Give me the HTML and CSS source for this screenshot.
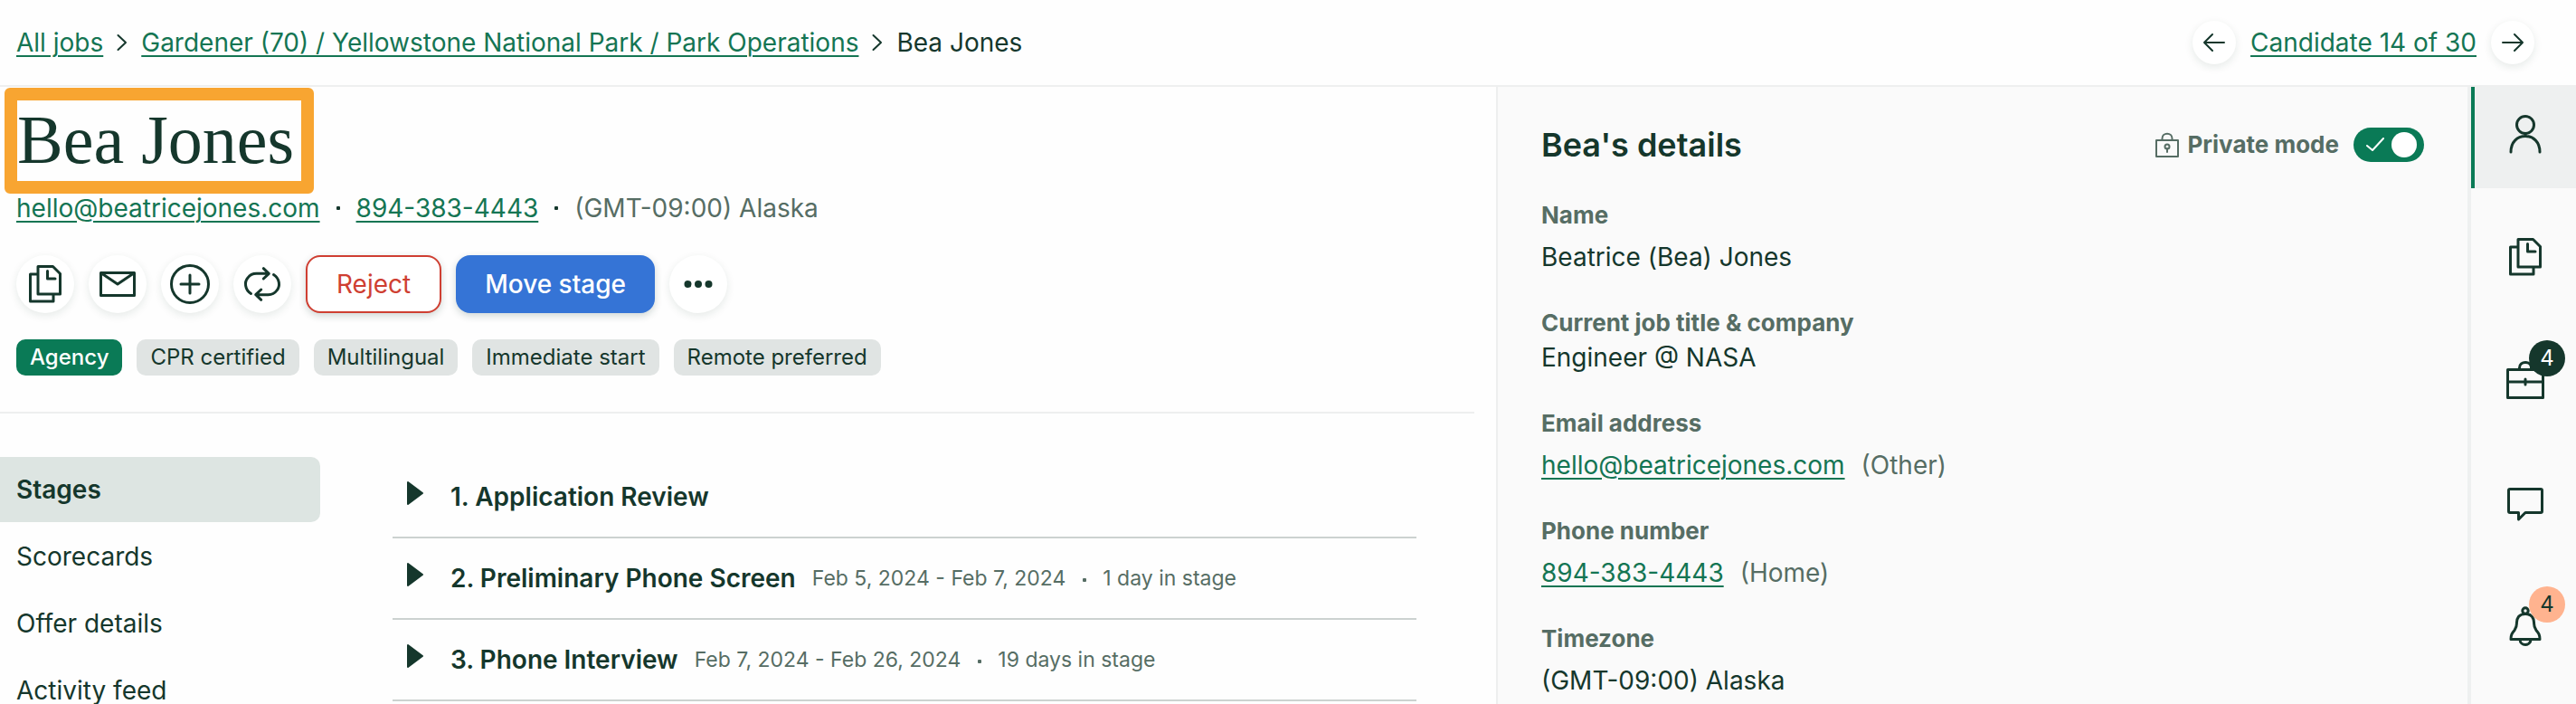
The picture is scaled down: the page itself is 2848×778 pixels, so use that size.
FILE: index.html
```html
<!DOCTYPE html>
<html lang="en">

<head>
    <meta charset="UTF-8">
    <title>Bea Jones</title>
    <link rel="stylesheet" href="styles.css">
</head>

<body>
    <svg width="0" height="0" class="defs" aria-hidden="true">
        <symbol id="docs" viewBox="0 0 48 48">
            <path d="M16 4.5H32.5L40.5 12.5V35H16ZM16 13H7.5V43H33V35M26.5 9.500V18H35"/>
        </symbol>
        <symbol id="chevron" viewBox="0 0 12 20">
            <path d="M1.500 2L10 10L1.500 18"/>
        </symbol>
    </svg>
    <header class="topbar">
        <nav class="crumbs" aria-label="Breadcrumb">
            <a href="#">All jobs</a>
            <svg class="chevron"><use href="#chevron"/></svg>
            <a href="#">Gardener (70) / Yellowstone National Park / Park Operations</a>
            <svg class="chevron"><use href="#chevron"/></svg>
            <span>Bea Jones</span>
        </nav>
        <div class="pager">
            <button class="round round--small" aria-label="Previous candidate">
                <svg class="arrow" viewBox="0 0 24 24"><path d="M23 12H1M10 3L1 12L10 21"/></svg>
            </button>
            <a href="#">Candidate 14 of 30</a>
            <button class="round round--small" aria-label="Next candidate">
                <svg class="arrow" viewBox="0 0 24 24"><path d="M1 12H23M14 3L23 12L14 21"/></svg>
            </button>
        </div>
    </header>

    <div class="layout">
        <main class="profile">
            <section class="summary">
                <h1>Bea Jones</h1>
                <div class="contact">
                    <a href="#">hello@beatricejones.com</a>
                    <span class="dot"></span>
                    <a href="#">894-383-4443</a>
                    <span class="dot"></span>
                    <span class="muted">(GMT-09:00) Alaska</span>
                </div>
                <div class="actions">
                    <button class="round" aria-label="Copy"><svg class="icon"><use href="#docs"/></svg></button>
                    <button class="round" aria-label="Email">
                        <svg class="icon" viewBox="0 0 48 48"><path d="M5.500 11.500H42.500V36.500H5.500ZM5.500 11.500L24 24L42.500 11.500"/></svg>
                    </button>
                    <button class="round" aria-label="Add">
                        <svg class="icon" viewBox="0 0 48 48"><circle cx="24" cy="24" r="20.500"/><path d="M24 14V34M14 24H34"/></svg>
                    </button>
                    <button class="round" aria-label="Transfer">
                        <svg class="icon" viewBox="0 0 48 48"><path d="M11.500 34.500C4.500 30 4 21.500 8 17C10.500 13.500 13.500 12.300 17.500 12.300H31M25.300 6.700L31.300 12.300L25.300 18M36.500 13.500C43.500 18 44 26.500 40 31C37.500 34.500 34.500 35.700 30.500 35.700H17M22.700 41.300L16.700 35.700L22.700 30"/></svg>
                    </button>
                    <button class="btn btn--reject">Reject</button>
                    <button class="btn btn--move">Move stage</button>
                    <button class="round" aria-label="More">
                        <svg class="icon icon--solid" viewBox="0 0 48 48"><circle cx="12.500" cy="24" r="4"/><circle cx="24" cy="24" r="4"/><circle cx="35.500" cy="24" r="4"/></svg>
                    </button>
                </div>
                <ul class="tags">
                    <li class="tag tag--agency">Agency</li>
                    <li class="tag">CPR certified</li>
                    <li class="tag">Multilingual</li>
                    <li class="tag">Immediate start</li>
                    <li class="tag">Remote preferred</li>
                </ul>
            </section>

            <div class="content">
                <nav class="sections" aria-label="Sections">
                    <a href="#" class="active">Stages</a>
                    <a href="#">Scorecards</a>
                    <a href="#">Offer details</a>
                    <a href="#">Activity feed</a>
                </nav>
                <div class="stages">
                    <button class="stage" aria-expanded="false">
                        <svg class="caret" viewBox="0 0 18 26"><path d="M1 1L17 13L1 25Z"/></svg>
                        <span class="stage__name">1. Application Review</span>
                    </button>
                    <button class="stage" aria-expanded="false">
                        <svg class="caret" viewBox="0 0 18 26"><path d="M1 1L17 13L1 25Z"/></svg>
                        <span class="stage__name">2. Preliminary Phone Screen</span>
                        <span class="stage__meta">Feb 5, 2024 - Feb 7, 2024 <span class="dot"></span> 1 day in stage</span>
                    </button>
                    <button class="stage" aria-expanded="false">
                        <svg class="caret" viewBox="0 0 18 26"><path d="M1 1L17 13L1 25Z"/></svg>
                        <span class="stage__name">3. Phone Interview</span>
                        <span class="stage__meta">Feb 7, 2024 - Feb 26, 2024 <span class="dot"></span> 19 days in stage</span>
                    </button>
                </div>
            </div>
        </main>

        <aside class="details">
            <div class="details__head">
                <h2>Bea's details</h2>
                <label class="private">
                    <svg class="lock" viewBox="0 0 28 28"><path d="M2 9H26V27H2ZM8.500 9V7C8.500 0 19.500 0 19.500 7V9M14 18V22"/><circle cx="14" cy="16" r="2.500"/></svg>
                    <span>Private mode</span>
                    <span class="toggle">
                        <input type="checkbox" role="switch" checked>
                        <svg class="toggle__check" viewBox="0 0 20 16"><path d="M1 9L7 14L19 1"/></svg>
                        <span class="toggle__knob"></span>
                    </span>
                </label>
            </div>
            <dl>
                <div class="field">
                    <dt>Name</dt>
                    <dd>Beatrice (Bea) Jones</dd>
                </div>
                <div class="field field--compact">
                    <dt>Current job title &amp; company</dt>
                    <dd>Engineer @ NASA</dd>
                </div>
                <div class="field">
                    <dt>Email address</dt>
                    <dd><a href="#">hello@beatricejones.com</a><span class="muted">(Other)</span></dd>
                </div>
                <div class="field">
                    <dt>Phone number</dt>
                    <dd><a href="#">894-383-4443</a><span class="muted">(Home)</span></dd>
                </div>
                <div class="field">
                    <dt>Timezone</dt>
                    <dd>(GMT-09:00) Alaska</dd>
                </div>
            </dl>
        </aside>

        <nav class="rail" aria-label="Panels">
            <button class="rail__item rail__item--active" aria-label="Details">
                <svg class="icon" viewBox="0 0 48 48"><circle cx="24" cy="14" r="9.500"/><path d="M8 44C8 33 15 26.500 24 26.500S40 33 40 44M24 24V26"/></svg>
            </button>
            <button class="rail__item" aria-label="Documents">
                <svg class="icon"><use href="#docs"/></svg>
            </button>
            <button class="rail__item" aria-label="Jobs">
                <span class="rail__icon">
                    <svg class="icon" viewBox="0 0 48 48"><path d="M4.500 12.500H43.500V43.500H4.500ZM4.500 26H43.500M24 23V29M17.500 12V10.500C17.500 2.500 30.500 2.500 30.500 10.500V12"/></svg>
                    <span class="badge">4</span>
                </span>
            </button>
            <button class="rail__item" aria-label="Comments">
                <svg class="icon" viewBox="0 0 48 48"><path d="M7 8.500H41Q42.500 8.500 42.500 10V33Q42.500 34.500 41 34.500H24L16.500 42V34.500H7Q5.500 34.500 5.500 33V10Q5.500 8.500 7 8.500Z"/></svg>
            </button>
            <button class="rail__item" aria-label="Notifications">
                <span class="rail__icon">
                    <svg class="icon" viewBox="0 0 48 48"><circle cx="24" cy="7" r="3.200"/><path d="M8 38.500C8 33 9.500 31.500 12 28.500C17 22 12 19.500 16.500 13.500C20 9.500 28 9.500 31.500 13.500C36 19.500 31 22 36 28.500C38.500 31.500 40 33 40 38.500ZM18 38.500C18 46.500 30 46.500 30 38.500"/></svg>
                    <span class="badge badge--alert">4</span>
                </span>
            </button>
        </nav>
    </div>
</body>

</html>
```

FILE: styles.css
```css
* {
    box-sizing: border-box;
}
body {
    margin: 0;
    height: 100vh;
    display: flex;
    flex-direction: column;
    overflow: hidden;
    background: #fefefe;
    color: #15372c;
    font-family: Inter, "Liberation Sans", sans-serif;
    font-size: 28px;
    line-height: 36px;
}
h1, h2, ul, dl, dd {
    margin: 0;
    padding: 0;
}
a {
    color: #147553;
    text-decoration-thickness: 2px;
    text-underline-offset: 4px;
}
button {
    padding: 0;
    border: none;
    background: none;
    color: inherit;
    font: inherit;
    cursor: pointer;
}
svg {
    display: block;
    flex: none;
    fill: none;
    stroke: currentColor;
    stroke-width: 2;
    stroke-linecap: round;
    stroke-linejoin: round;
}
.defs {
    position: absolute;
}
.muted {
    color: #566d64;
}
.dot {
    display: inline-block;
    width: 4px;
    height: 4px;
    margin: 0 18px;
    border-radius: 1px;
    background: currentColor;
    vertical-align: middle;
}
.icon {
    width: 48px;
    height: 48px;
    stroke-width: 3;
}
.icon--solid {
    fill: currentColor;
    stroke: none;
}

/* top bar */
.topbar {
    flex: none;
    display: flex;
    justify-content: space-between;
    align-items: center;
    height: 96px;
    padding: 0 46px 0 18px;
    border-bottom: 2px solid #eeefef;
}
.crumbs, .pager {
    display: flex;
    align-items: center;
    gap: 16px;
}
.crumbs {
    gap: 15px;
}
.chevron {
    width: 12px;
    height: 20px;
}
.round {
    display: flex;
    flex: none;
    justify-content: center;
    align-items: center;
    width: 64px;
    height: 64px;
    border-radius: 50%;
    background: #fff;
    box-shadow: 0 3px 10px rgba(21, 55, 44, 0.1);
}
.round--small {
    width: 48px;
    height: 48px;
}
.arrow {
    width: 24px;
    height: 24px;
}

.layout {
    flex: 1;
    display: grid;
    grid-template-columns: minmax(0, 1654fr) minmax(0, 1074fr) 120px;
    min-height: 0;
}

/* candidate */
.profile {
    padding-right: 24px;
}
.summary {
    padding: 1px 0 40px;
    border-bottom: 2px solid #eeefef;
}
h1 {
    width: fit-content;
    margin-left: 5px;
    padding: 0 8px 3px 0;
    border: 14px solid #f8a531;
    border-radius: 6px;
    font: 400 76px/86px "Liberation Serif", serif;
}
.contact, .actions, .tags {
    display: flex;
    align-items: center;
    padding-left: 18px;
}
.contact {
    line-height: 32px;
}
.actions {
    gap: 16px;
    margin-top: 36px;
}
.btn {
    height: 64px;
    padding: 0 32px;
    border-radius: 16px;
    font-weight: 500;
    box-shadow: 0 3px 8px rgba(21, 55, 44, 0.2);
}
.btn--reject {
    border: 2px solid #cf3f32;
    background: #fff;
    color: #cf3f32;
    font-weight: 400;
}
.btn--move {
    background: #3574d6;
    color: #fff;
}
.tags {
    gap: 16px;
    margin-top: 29px;
    list-style: none;
}
.tag {
    padding: 0 15px;
    border-radius: 10px;
    background: #e0e4e3;
    font-size: 24px;
    line-height: 40px;
}
.tag--agency {
    background: #0a7a56;
    color: #fff;
    font-weight: 500;
}

.content {
    display: flex;
    align-items: flex-start;
    gap: 80px;
    padding: 48px 64px 0 0;
}
.sections {
    display: flex;
    flex: none;
    flex-direction: column;
    gap: 2px;
    width: 354px;
}
.sections a {
    padding: 18px;
    border-radius: 0 10px 10px 0;
    color: inherit;
    text-decoration: none;
}
.sections .active {
    background: #dde5e2;
    font-weight: 600;
}
.stages {
    flex: 1;
}
.stage {
    display: flex;
    align-items: center;
    width: 100%;
    height: 90px;
    padding: 0 16px;
    border-bottom: 2px solid #ccd2d0;
    text-align: left;
}
.caret {
    width: 18px;
    height: 26px;
    margin: 0 30px 8px 0;
    fill: currentColor;
}
.stage__name {
    font-weight: 600;
}
.stage__meta {
    margin-left: 18px;
    color: #566d64;
    font-size: 23px;
}
.stage__meta .dot {
    margin: 0 12px;
}

/* details */
.details {
    padding: 42px 48px 0;
    border-left: 2px solid #eeefef;
    background: #fafafa;
}
.details__head {
    display: flex;
    justify-content: space-between;
    align-items: center;
    margin-bottom: 40px;
}
h2 {
    font-size: 36px;
    font-weight: 600;
    line-height: 44px;
}
.private {
    display: flex;
    align-items: center;
    gap: 8px;
    color: #566d64;
    font-size: 26px;
    font-weight: 700;
}
.lock {
    width: 28px;
    height: 28px;
}
.toggle {
    position: relative;
    display: flex;
    align-items: center;
    justify-content: space-between;
    width: 78px;
    height: 38px;
    margin-left: 8px;
    padding: 0 8px 0 14px;
    border-radius: 19px;
    background: #0a7a56;
    color: #fff;
}
.toggle input {
    position: absolute;
    inset: 0;
    width: 100%;
    height: 100%;
    margin: 0;
    opacity: 0;
}
.toggle__check {
    width: 20px;
    height: 16px;
}
.toggle__knob {
    width: 28px;
    height: 28px;
    border-radius: 50%;
    background: #fff;
}
.field {
    margin-bottom: 39px;
}
dt {
    margin-bottom: 12px;
    color: #566d64;
    font-size: 26px;
    font-weight: 700;
    line-height: 32px;
}
.field--compact dt {
    margin-bottom: 4px;
}
dd .muted {
    margin-left: 18px;
}

/* right rail */
.rail {
    display: flex;
    flex-direction: column;
    gap: 24px;
    border-left: 4px solid #eef0f0;
    background: #fafafa;
}
.rail__item {
    display: flex;
    flex: none;
    justify-content: center;
    align-items: center;
    height: 112px;
    padding-bottom: 8px;
    border-left: 4px solid transparent;
}
.rail__item--active {
    border-left-color: #0a7a56;
    background: #eef0f0;
}
.rail__icon {
    position: relative;
}
.badge {
    position: absolute;
    top: -20px;
    left: 28px;
    width: 40px;
    height: 40px;
    border-radius: 50%;
    background: #15372c;
    color: #fff;
    font-size: 24px;
    line-height: 40px;
}
.badge--alert {
    background: #ffb38f;
    color: #15372c;
}
```
